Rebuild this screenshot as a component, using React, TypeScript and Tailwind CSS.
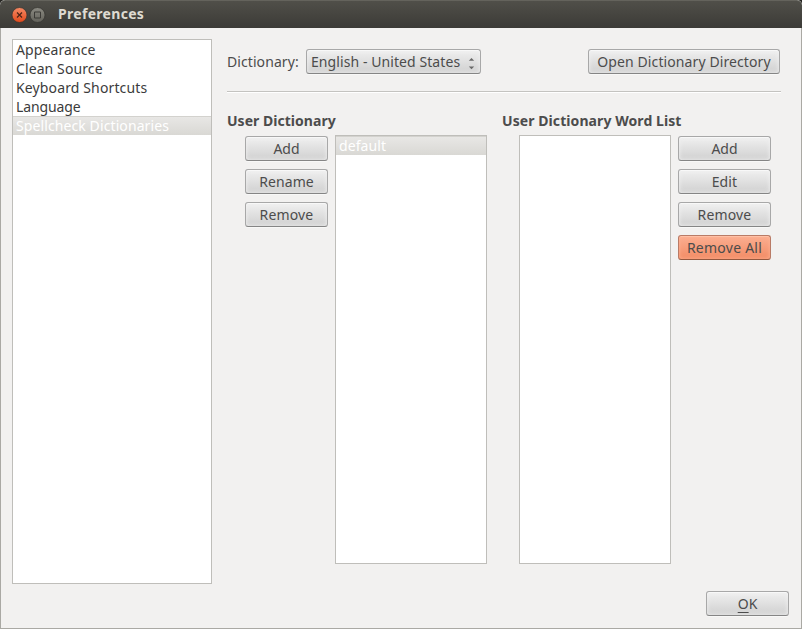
import type { ReactNode } from 'react';

function Button({ children, className = '', highlighted = false }: { children: ReactNode; className?: string; highlighted?: boolean }) {
  const tone = highlighted
    ? 'border-[#b97b66] border-b-[#94583f] from-[#fbae91] to-[#f28b64] shadow-[inset_0_1px_0_#ffc0a6,inset_0_0_4px_#ffb293]'
    : 'border-[#a8a8a8] border-b-[#858585] from-[#f0f0f0] to-[#d0d0d0] shadow-[inset_0_1px_0_#f8f8f8,inset_0_0_4px_#f2f2f2,0_1px_0_#f8f8f7]';
  return (
    <button type="button" className={`flex h-[25px] shrink-0 items-center justify-center whitespace-nowrap rounded-[3px] border bg-gradient-to-b text-[#4c4c4c] ${tone} ${className}`}>
      {children}
    </button>
  );
}

const categories = [
  { name: 'Appearance', tracking: 'tracking-[0.1px]' },
  { name: 'Clean Source', tracking: 'tracking-[0.1px]' },
  { name: 'Keyboard Shortcuts', tracking: 'tracking-[0.13px]' },
  { name: 'Language', tracking: 'tracking-[-0.1px]' },
];

const selectedRow = 'h-[19px] border-t border-[#d3d2ce] bg-gradient-to-b from-[#e8e7e5] to-[#d9d8d4] pl-[3px] leading-[17px] text-white tracking-[0.1px]';

export default function App() {
  return (
    <div className="bg-[#262522]">
      <div className="flex h-[629px] w-[802px] flex-col overflow-hidden rounded-t-[5px] bg-[#f2f1f0] font-['Noto_Sans',sans-serif] text-[14px] leading-[19px] text-[#4c4c4c]">
        <header className="flex h-7 shrink-0 items-center rounded-t-[5px] border-t border-[#64635c] bg-gradient-to-b from-[#504f49] to-[#3c3b37] pl-[11px]">
          <svg width="36" height="18" viewBox="0 0 36 18" className="shrink-0">
            <defs>
              <linearGradient id="close" x1="0" y1="0" x2="0" y2="1">
                <stop offset="0" stopColor="#f58a65" />
                <stop offset="1" stopColor="#e2491b" />
              </linearGradient>
              <linearGradient id="maximize" x1="0" y1="0" x2="0" y2="1">
                <stop offset="0" stopColor="#8b8a82" />
                <stop offset="1" stopColor="#62615a" />
              </linearGradient>
            </defs>
            <circle cx="8.5" cy="9" r="7.5" fill="url(#close)" stroke="#34332f" strokeWidth=".7" />
            <path d="M6 6.5l5 5M11 6.5l-5 5" stroke="#4d2417" strokeWidth="1.2" />
            <circle cx="26.5" cy="9" r="7.5" fill="url(#maximize)" stroke="#34332f" strokeWidth=".7" />
            <path d="M23.5 6h6v6h-6z" fill="none" stroke="#3b3a36" />
          </svg>
          <h1 className="mb-[2px] ml-[11px] text-[14px] font-bold tracking-[0.3px] text-[#dfdbd2]">Preferences</h1>
        </header>

        <main className="flex min-h-0 flex-1 flex-col border-x border-b border-[#aaa9a4]">
          <div className="flex h-[556px] shrink-0 pl-[11px] pt-[11px]">
            <nav className="flex h-[545px] w-[200px] shrink-0 flex-col border border-[#bfbeba] bg-white text-[#3c3c3c]">
              {categories.map((c) => (
                <div key={c.name} className={`h-[19px] pl-[3px] ${c.tracking}`}>{c.name}</div>
              ))}
              <div className={selectedRow}>Spellcheck Dictionaries</div>
            </nav>

            <section className="ml-[15px] flex w-[554px] flex-col pt-[10px]">
              <div className="flex h-[25px] items-center">
                <span className="w-[79px] tracking-[0.08px]">Dictionary:</span>
                <Button className="w-[175px] pl-[4px] pr-[5px]">
                  <span className="flex-1 text-left tracking-[0.08px]">English - United States</span>
                  <svg width="7" height="13" viewBox="0 0 7 13" className="mt-[3px]">
                    <path d="M.8 3.8h5.4L3.5 1zM.8 9.5h5.4L3.5 12.3z" fill="#696969" />
                  </svg>
                </Button>
                <Button className="ml-[107px] w-[192px] tracking-[0.1px]">Open Dictionary Directory</Button>
              </div>
              <div className="mt-[17px] h-[2px] border-b border-t border-b-white border-t-[#c4c3c0]" />

              <div className="mt-[18px] flex">
                <div className="w-[275px]">
                  <h2 className="h-[19px] font-bold tracking-[0.03px]">User Dictionary</h2>
                  <div className="mt-[5px] flex pl-[18px]">
                    <div className="flex flex-col gap-2 pt-px">
                      <Button className="w-[83px]">Add</Button>
                      <Button className="w-[83px] tracking-[0.1px]">Rename</Button>
                      <Button className="w-[83px] tracking-[0.15px]">Remove</Button>
                    </div>
                    <div className="ml-[7px] h-[429px] w-[152px] border border-[#bfbeba] bg-white">
                      <div className={selectedRow}>default</div>
                    </div>
                  </div>
                </div>
                <div className="w-[279px]">
                  <h2 className="h-[19px] font-bold tracking-[0.08px]">User Dictionary Word List</h2>
                  <div className="mt-[5px] flex pl-[17px]">
                    <div className="h-[429px] w-[152px] border border-[#bfbeba] bg-white" />
                    <div className="ml-[7px] flex flex-col gap-2 pt-px">
                      <Button className="w-[93px]">Add</Button>
                      <Button className="w-[93px] tracking-[0.15px]">Edit</Button>
                      <Button className="w-[93px] tracking-[0.15px]">Remove</Button>
                      <Button className="w-[93px] tracking-[0.25px]" highlighted>Remove All</Button>
                    </div>
                  </div>
                </div>
              </div>
            </section>
          </div>
          <footer className="flex justify-end pr-[12px] pt-[7px]">
            <Button className="w-[83px]"><span className="underline decoration-1 underline-offset-[3px]">O</span>K</Button>
          </footer>
        </main>
      </div>
    </div>
  );
}
